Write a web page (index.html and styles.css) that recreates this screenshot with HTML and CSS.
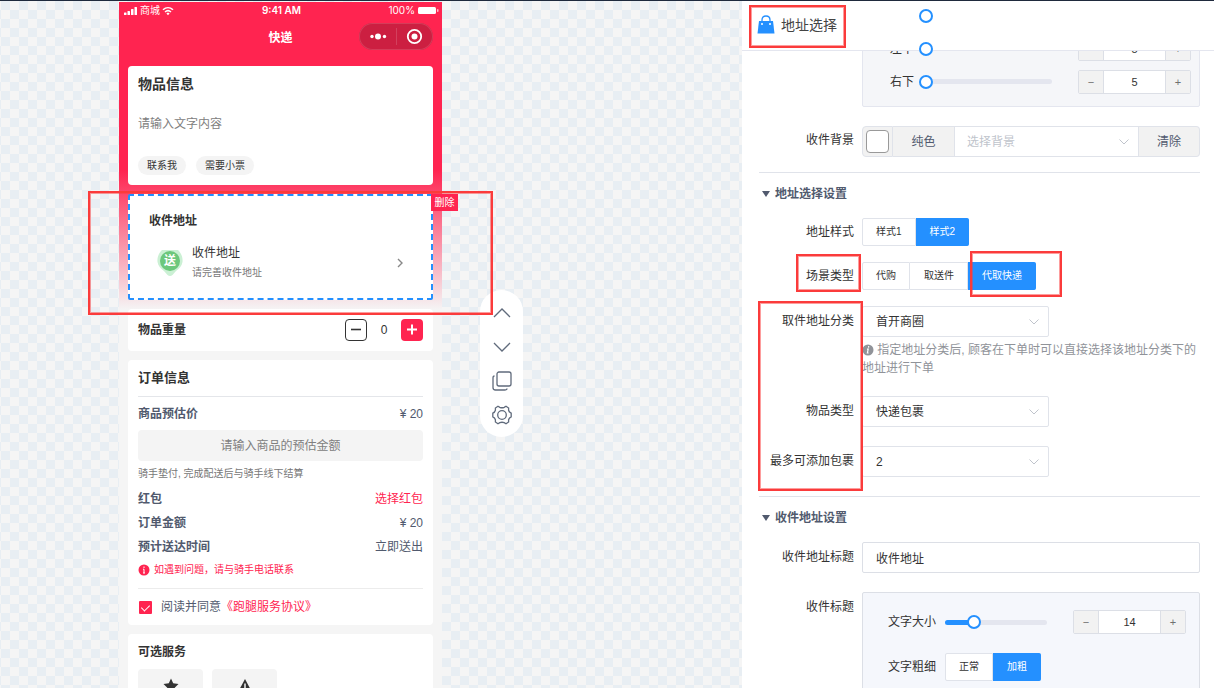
FILE: index.html
```html
<!DOCTYPE html>
<html lang="zh-CN">
<head>
  <meta charset="UTF-8">
  <meta name="viewport" content="width=device-width, initial-scale=1.0">
  <title>地址选择</title>
  <link rel="stylesheet" href="styles.css">
</head>
<body>
  <main class="canvas">
    <div class="phone">
      <div class="status">
        <span class="carrier">
          <svg width="14" height="10" viewBox="0 0 14 10" fill="#fff"><rect x="0" y="6.500" width="2.500" height="2.500" rx=".5"/><rect x="3.500" y="5" width="2.500" height="4" rx=".5"/><rect x="7" y="3" width="2.500" height="6" rx=".5"/><rect x="10.500" y="1" width="2.500" height="8" rx=".5"/></svg>
          商城
          <svg width="12" height="10" viewBox="0 0 12 10" fill="none" stroke="#fff" stroke-width="1.500"><path d="M1 3.800C4 1 8 1 11 3.800M3 6C5 4.200 7 4.200 9 6"/><path d="M6 6.400L7.600 7.600 6 9.200 4.400 7.600Z" fill="#fff" stroke="none"/></svg>
        </span>
        <b class="time">9:41 AM</b>
        <span class="power">100%
          <svg width="22" height="9" viewBox="0 0 22 9"><rect x="1" y="1" width="18" height="7" rx="1.500" fill="#fff"/><rect x="20" y="3" width="1.500" height="3" rx=".7" fill="#fff" opacity=".7"/></svg>
        </span>
      </div>
      <div class="nav">
        <b>快递</b>
        <div class="capsule">
          <svg width="74" height="27" viewBox="0 0 74 27" fill="#fff"><circle cx="13" cy="13.500" r="1.700"/><circle cx="19" cy="13.500" r="3"/><circle cx="25.500" cy="13.500" r="1.700"/><rect x="37" y="5" width="1" height="17" opacity=".15"/><circle cx="55.500" cy="13.500" r="6.700" fill="none" stroke="#fff" stroke-width="1.800"/><circle cx="55.500" cy="13.500" r="3"/></svg>
        </div>
      </div>

      <div class="cards">
        <section class="card goods">
          <h2>物品信息</h2>
          <textarea placeholder="请输入文字内容" aria-label="物品信息"></textarea>
          <div class="tags"><button>联系我</button><button>需要小票</button></div>
        </section>

        <section class="card address">
          <h3>收件地址</h3>
          <div class="address-row">
            <span class="pin">
              <svg width="26" height="26" viewBox="0 0 26 26"><path d="M5 0H21C24 3 26 7 25.500 12C25 16 22 19 19 21L15.500 25Q13 27 10.500 25L7 21C4 19 1 16 .5 12C0 7 2 3 5 0Z" fill="#cbf0d4"/><circle cx="13" cy="11" r="10" fill="#6cc77c"/></svg>
              <b>送</b>
            </span>
            <div class="address-text"><p>收件地址</p><small>请完善收件地址</small></div>
            <svg class="arrow" width="8" height="12" viewBox="0 0 8 12" fill="none" stroke="#888" stroke-width="1.400"><path d="M2 2L6 6 2 10"/></svg>
          </div>
          <button class="delete">删除</button>
          <i class="mark mark-address"></i>
        </section>

        <section class="card weight">
          <h3>物品重量</h3>
          <button class="step minus" aria-label="减少"><svg width="12" height="12" viewBox="0 0 12 12" stroke="#333" stroke-width="1.600"><path d="M1 5.500H11"/></svg></button>
          <span>0</span>
          <button class="step plus" aria-label="增加"><svg width="12" height="12" viewBox="0 0 12 12" stroke="#fff" stroke-width="2"><path d="M1 5.500H11M6 .5V10.500"/></svg></button>
        </section>

        <section class="card order">
          <h3 class="order-title">订单信息</h3>
          <div class="line"><b>商品预估价</b><span>¥ 20</span></div>
          <input class="estimate" type="text" placeholder="请输入商品的预估金额" aria-label="商品预估价">
          <p class="tip">骑手垫付, 完成配送后与骑手线下结算</p>
          <div class="line"><b>红包</b><a href="#">选择红包</a></div>
          <div class="line"><b>订单金额</b><span>¥ 20</span></div>
          <div class="line"><b>预计送达时间</b><span>立即送出</span></div>
          <p class="alert"><svg width="12" height="12" viewBox="0 0 12 12"><circle cx="6" cy="6" r="5.500" fill="#ff2450"/><path d="M6 2.500V4M5 5.200H6V9M5 9H7" stroke="#fff" fill="none"/></svg>如遇到问题，请与骑手电话联系</p>
          <div class="agree">
            <input type="checkbox" id="agree" checked>
            <label for="agree">阅读并同意</label><a href="#">《跑腿服务协议》</a>
          </div>
        </section>

        <section class="card services">
          <h3>可选服务</h3>
          <div class="tiles">
            <div class="tile"><svg width="16" height="16" viewBox="0 0 16 16" fill="#333"><path d="M8 0.500L10.200 5.300 15.500 6 11.700 9.700 12.600 15 8 12.400 3.400 15 4.300 9.700 .5 6 5.800 5.300Z"/></svg></div>
            <div class="tile"><svg width="16" height="16" viewBox="0 0 16 16"><path d="M8 1L15.500 15H.5Z" fill="#333"/><path d="M8 5.500V10.500M8 12V13.500" stroke="#fff" stroke-width="1.400"/></svg></div>
          </div>
        </section>
      </div>
    </div>

    <div class="tools">
      <button aria-label="上移"><svg width="20" height="20" viewBox="0 0 20 20"><path d="M2 14L10 6 18 14"/></svg></button>
      <button aria-label="下移"><svg width="20" height="20" viewBox="0 0 20 20"><path d="M2 6L10 14 18 6"/></svg></button>
      <button aria-label="复制"><svg width="20" height="20" viewBox="0 0 20 20"><rect x="5" y="1" width="14" height="14" rx="2"/><path d="M2.500 5Q1 5 1 7V16.500Q1 19 3.500 19H12.500Q15 19 15 17.500"/></svg></button>
      <button aria-label="设置"><svg width="20" height="20" viewBox="0 0 20 20"><circle cx="10" cy="10" r="4.300"/><path d="M6 1.200L7.800 2.300Q10 3.200 12.200 2.300L14 1.200 16.600 3V5.200Q17.200 7.300 19.200 8.200V11.800Q17.200 12.700 16.600 14.800V17L14 18.800 12.200 17.700Q10 16.800 7.800 17.700L6 18.800 3.400 17V14.800Q2.800 12.700 .8 11.800V8.200Q2.800 7.300 3.400 5.200V3Z"/></svg></button>
    </div>
  </main>

  <aside class="panel">
    <header class="panel-head">
      <svg width="18" height="19" viewBox="0 0 18 19"><path d="M5 8V5Q5 1 9 1T13 5V8" fill="none" stroke="#2490ff" stroke-width="1.300"/><path d="M2 6H16L17.500 18.500H.5Z" fill="#2490ff"/><path d="M5 8V10M13 8V10" stroke="#fff" stroke-width="1.500"/></svg>
      <h1>地址选择</h1>
      <i class="mark mark-title"></i>
    </header>

    <form class="panel-body">
      <div class="row corners">
        <div></div>
        <div class="group group-corner">
          <div class="group-row">
            <label for="c2">右上</label>
            <div class="slider"><input type="range" id="c2" min="5" max="50" value="5"></div>
            <div class="number"><button type="button">−</button><input type="text" value="5" aria-label="右上"><button type="button">+</button></div>
          </div>
          <div class="group-row">
            <label for="c3">左下</label>
            <div class="slider"><input type="range" id="c3" min="5" max="50" value="5"></div>
            <div class="number"><button type="button">−</button><input type="text" value="5" aria-label="左下"><button type="button">+</button></div>
          </div>
          <div class="group-row">
            <label for="c4">右下</label>
            <div class="slider"><input type="range" id="c4" min="5" max="50" value="5"></div>
            <div class="number"><button type="button">−</button><input type="text" value="5" aria-label="右下"><button type="button">+</button></div>
          </div>
        </div>
      </div>

      <div class="row row-bg">
        <label class="name" for="bg">收件背景</label>
        <div class="bg-picker">
          <span class="swatch"><input type="color" value="#ffffff" aria-label="颜色"></span>
          <button type="button" class="solid">纯色</button>
          <div class="select">
            <select id="bg" class="empty"><option>选择背景</option></select>
            <svg width="10" height="6" viewBox="0 0 10 6"><path d="M.5.5L5 5 9.500.5"/></svg>
          </div>
          <button type="button">清除</button>
        </div>
      </div>

      <section>
        <h2>地址选择设置</h2>
        <div class="row row-radio">
          <span class="name" id="style-name">地址样式</span>
          <div class="radios" role="radiogroup" aria-labelledby="style-name">
            <label><input type="radio" name="style"><span>样式1</span></label>
            <label><input type="radio" name="style" checked><span>样式2</span></label>
          </div>
        </div>
        <div class="row row-radio">
          <span class="name" id="scene-name">场景类型<i class="mark mark-scene"></i></span>
          <div class="radios" role="radiogroup" aria-labelledby="scene-name">
            <label><input type="radio" name="scene"><span>代购</span></label>
            <label><input type="radio" name="scene"><span>取送件</span></label>
            <label><input type="radio" name="scene" checked><span>代取快递</span><i class="mark mark-express"></i></label>
          </div>
        </div>
        <div class="row">
          <label class="name" for="category">取件地址分类<i class="mark mark-names"></i></label>
          <div>
            <div class="select short">
              <select id="category"><option>首开商圈</option></select>
              <svg width="10" height="6" viewBox="0 0 10 6"><path d="M.5.5L5 5 9.500.5"/></svg>
            </div>
            <p class="help"><svg width="12" height="12" viewBox="0 0 12 12"><circle cx="6" cy="6" r="5.500" fill="#909399"/><path d="M6.700 2.200L6.500 3.600M5 5.200H6.200L5.400 9H6.600" stroke="#fff" stroke-width="1.200" fill="none"/></svg> 指定地址分类后, 顾客在下单时可以直接选择该地址分类下的地址进行下单</p>
          </div>
        </div>
        <div class="row">
          <label class="name" for="kind">物品类型</label>
          <div class="select short">
            <select id="kind"><option>快递包裹</option></select>
            <svg width="10" height="6" viewBox="0 0 10 6"><path d="M.5.5L5 5 9.500.5"/></svg>
          </div>
        </div>
        <div class="row">
          <label class="name" for="max">最多可添加包裹</label>
          <div class="select short">
            <select id="max"><option>2</option></select>
            <svg width="10" height="6" viewBox="0 0 10 6"><path d="M.5.5L5 5 9.500.5"/></svg>
          </div>
        </div>
      </section>

      <section>
        <h2>收件地址设置</h2>
        <div class="row">
          <label class="name" for="addr-title">收件地址标题</label>
          <input class="text" type="text" id="addr-title" value="收件地址">
        </div>
        <div class="row">
          <span class="name">收件标题</span>
          <div class="group group-text">
            <div class="group-row">
              <label for="size">文字大小</label>
              <div class="slider"><span class="fill" style="width: 28%"></span><input type="range" id="size" min="0" max="50" value="14"></div>
              <div class="number"><button type="button">−</button><input type="text" value="14" aria-label="文字大小"><button type="button">+</button></div>
            </div>
            <div class="group-row">
              <span id="bold-name">文字粗细</span>
              <div class="radios" role="radiogroup" aria-labelledby="bold-name">
                <label><input type="radio" name="bold"><span>正常</span></label>
                <label><input type="radio" name="bold" checked><span>加粗</span></label>
              </div>
            </div>
          </div>
        </div>
      </section>
    </form>
  </aside>
</body>
</html>
```

FILE: styles.css
```css
* { box-sizing: border-box; margin: 0; padding: 0; }
body { display: flex; height: 100vh; overflow: hidden; border-top: 1px solid #1f2a3d; font: 12px/20px "Liberation Sans", "Noto Sans CJK SC", sans-serif; color: #333; background: #fff; }
button, input, select, textarea { font: inherit; color: inherit; border: 0; outline: 0; background: none; }
button { cursor: pointer; }
a { color: #ff2450; text-decoration: none; }
svg { flex: none; }

/* canvas */
.canvas { flex: 1; display: flex; align-items: flex-start; gap: 38px; padding: 1px 0 0 119px; overflow: hidden; background: repeating-conic-gradient(#f5f5f5 0 25%, #e8eef3 0 50%) 1px 0 / 18px 18px; }
.phone { width: 323px; min-height: 100vh; background: linear-gradient(#ff2450 168px, #f5f5f5 308px); }
.status { display: flex; align-items: center; justify-content: space-between; height: 17px; padding: 0 3px 0 5px; color: #fff; font: 10px/17px Inter, "Noto Sans CJK SC", sans-serif; }
.status span { display: flex; align-items: center; gap: 2px; flex: 1; }
.time { font-weight: 600; }
.status .power { justify-content: flex-end; }
.nav { position: relative; display: flex; align-items: center; justify-content: center; height: 38px; color: #fff; }
.capsule { position: absolute; right: 9px; top: 4px; height: 27px; border-radius: 14px; background: #cc1f41; box-shadow: inset 0 0 0 1px #d53c59; }
.cards { padding: 9px; }
.card { margin-bottom: 9px; padding: 8px 10px; border-radius: 4px; background: #fff; }
.card h2 { font-size: 14px; line-height: 20px; font-weight: 700; }
.card h3 { font-size: 12px; line-height: 20px; font-weight: 700; }

.goods { padding-bottom: 10px; }
.goods textarea { display: block; width: 100%; height: 42px; margin-top: 20px; resize: none; }
textarea::placeholder, .estimate::placeholder { color: #808080; opacity: 1; }
.tags { display: flex; gap: 10px; }
.tags button { height: 19px; padding: 0 9px; border-radius: 10px; background: #f4f4f4; font-size: 10px; line-height: 19px; }

.address { position: relative; height: 106px; padding: 15px 19px; border: 2px dashed #2490ff; border-radius: 2px; }
.address-row { display: flex; align-items: center; gap: 9px; margin-top: 12px; padding: 0 8px; }
.pin { position: relative; height: 26px; color: #fff; }
.pin b { position: absolute; inset: 0; line-height: 22px; text-align: center; }
.address-text { flex: 1; }
.address-text small { display: block; font-size: 10px; color: #777; }
.delete { position: absolute; left: 100%; top: -2px; width: 27px; height: 17px; background: #ff2450; color: #fff; font-size: 10px; line-height: 15px; }

.weight { display: flex; align-items: center; height: 42px; }
.weight h3 { flex: 1; }
.weight span { width: 34px; text-align: center; }
.step { display: flex; align-items: center; justify-content: center; width: 22px; height: 22px; border-radius: 4px; }
.minus { border: 1px solid #333; }
.plus { background: #ff2450; }

.order { color: #515a6e; }
.order .order-title { margin-bottom: 5px; padding-bottom: 8px; border-bottom: 1px solid #e4e6ea; font-size: 13px; color: #333; }
.line { display: flex; justify-content: space-between; line-height: 24px; }
.line b { font-weight: 700; }
.estimate { width: 100%; height: 31px; margin-top: 4px; display: block; border-radius: 4px; background: #f4f4f4; text-align: center; }
.tip { margin: 3px 0; font-size: 10px; color: #777; }
.alert { display: flex; align-items: center; gap: 4px; padding-bottom: 7px; border-bottom: 1px solid #ececec; font-size: 10px; line-height: 22px; color: #ff2450; }
.agree { display: flex; align-items: center; margin-top: 8px; }
.agree input { appearance: none; display: flex; justify-content: center; width: 13px; height: 13px; margin: 0 9px 0 1px; border-radius: 1px; background: #ff2450; }
.agree input::after { content: ""; width: 4px; height: 7px; margin-top: 2px; border: solid #fff; border-width: 0 1px 1px 0; transform: rotate(45deg); }
.services { min-height: 120px; }
.tiles { display: flex; gap: 9px; margin-top: 7px; }
.tile { width: 65px; height: 60px; padding-top: 9px; border-radius: 4px; background: #f4f4f4; text-align: center; }

.tools { display: flex; flex-direction: column; width: 43px; margin-top: 288px; padding: 6px 0 5px; border-radius: 22px; background: #fff; }
.tools button { display: flex; align-items: center; justify-content: center; height: 34px; }
.tools svg { fill: none; stroke: #606b7c; stroke-width: 1.3; }

/* settings panel */
.panel { position: relative; width: 472px; overflow: hidden; background: #fff; }
.panel-head { position: relative; z-index: 2; display: flex; align-items: center; gap: 6px; height: 50px; padding: 0 0 2px 15px; border-bottom: 1px solid #e4e6ef; background: #fff; }
.panel-head h1 { font-size: 14px; font-weight: 400; color: #444; }
.panel-body { margin-top: -61px; padding: 0 14px 0 17px; }
.row { display: grid; grid-template-columns: 95px 1fr; gap: 8px; margin-bottom: 19px; }
.name { position: relative; text-align: right; line-height: 31px; white-space: nowrap; }
.row-bg { margin-bottom: 15px; }
.row-bg .name { line-height: 29px; }
.row-radio { margin-bottom: 16px; }
.row-radio .name { line-height: 28px; }
.panel h2 { display: flex; align-items: center; gap: 5px; margin-bottom: 14px; padding-top: 11px; border-top: 1px solid #e0e3ea; font-size: 12px; line-height: 20px; font-weight: 700; color: #515a6e; }
.panel h2::before { content: ""; margin-left: 3px; border: 4px solid transparent; border-top: 6px solid #515a6e; border-bottom: 0; }

.select { position: relative; flex: 1; }
.short { width: 187px; }
.select select { appearance: none; display: block; width: 100%; height: 31px; padding: 0 13px; border: 1px solid #e0e3ea; border-radius: 2px; background: #fff; }
.select svg { position: absolute; right: 10px; top: 13px; fill: none; stroke: #c0c4cc; pointer-events: none; }
.select .empty { color: #c0c4cc; border-radius: 0; padding: 0 12px; }
.text { height: 31px; padding: 0 13px; border: 1px solid #dcdfe6; border-radius: 2px; }
.help { margin-top: 4px; line-height: 18px; color: #909399; }
.help svg { vertical-align: -2px; }

.bg-picker { display: flex; height: 31px; border-radius: 4px; }
.swatch { display: flex; align-items: center; justify-content: center; width: 31px; border: 1px solid #e0e3ea; border-radius: 4px 0 0 4px; background: #f2f2f2; }
.swatch input { width: 23px; height: 23px; border: 1px solid #999; border-radius: 4px; background: #fff; }
.swatch input::-webkit-color-swatch-wrapper { padding: 1px; }
.swatch input::-webkit-color-swatch { border: 0; }
.bg-picker button { width: 61px; border: 1px solid #e0e3ea; border-left: 0; border-radius: 0 4px 4px 0; background: #f2f2f2; color: #515a6e; }
.bg-picker .solid { border-right: 0; border-radius: 0; }

.radios { display: flex; }
.radios label { position: relative; }
.radios input { position: absolute; opacity: 0; }
.radios span { display: block; height: 28px; padding: 0 13px; border: 1px solid #e0e3ea; background: #fff; font-size: 10px; line-height: 26px; }
.radios label + label span { border-left: 0; padding-left: 14px; }
.radios label:first-child span { border-radius: 2px 0 0 2px; }
.radios label:last-child span { border-radius: 0 2px 2px 0; }
.radios :checked + span { border-color: #2490ff; background: #2490ff; color: #fff; }

.group { border: 1px solid #e4e6ef; border-radius: 2px; background: #f5f6f9; }
.group-row { display: flex; align-items: center; }
.group-corner { padding: 8px 8px 8px 27px; }
.group-corner .group-row { gap: 12px; height: 33px; }
.group-text { min-height: 140px; padding: 14px 13px 14px 25px; border-color: #dcdfe6; background: #f5f7fc; }
.group-text .group-row { gap: 9px; height: 30px; margin-bottom: 15px; }
.slider { position: relative; flex: 1; height: 5px; border-radius: 3px; background: #e4e6ef; }
.slider .fill { display: block; height: 5px; border-radius: 3px; background: #2490ff; }
.slider input { appearance: none; position: absolute; z-index: 3; left: -7px; top: -5px; width: calc(100% + 14px); height: 15px; }
.slider input::-webkit-slider-thumb { appearance: none; width: 14px; height: 14px; border: 2px solid #2490ff; border-radius: 50%; background: #fff; }
.number { display: flex; width: 113px; height: 24px; margin-left: 14px; border: 1px solid #dcdfe6; border-radius: 2px; background: #fff; font-size: 11px; }
.group-text .number { margin-left: 17px; }
.number button { width: 24px; background: #f2f2f2; color: #707070; }
.number input { flex: 1; min-width: 0; border: solid #dcdfe6; border-width: 0 1px; text-align: center; }

/* red highlight frames */
.mark { position: absolute; z-index: 4; border: 2px solid #fb3b3b; box-shadow: inset 0 0 0 1px #fb3b3b80; pointer-events: none; }
.mark-address { left: -42px; top: -5px; width: 405px; height: 124px; }
.mark-title { left: 7px; top: 4px; width: 97px; height: 43px; }
.mark-scene { right: -7px; top: -8px; width: 65px; height: 38px; }
.mark-express { left: 2px; top: -11px; width: 92px; height: 46px; }
.mark-names { right: -9px; top: -5px; width: 105px; height: 190px; }
```
